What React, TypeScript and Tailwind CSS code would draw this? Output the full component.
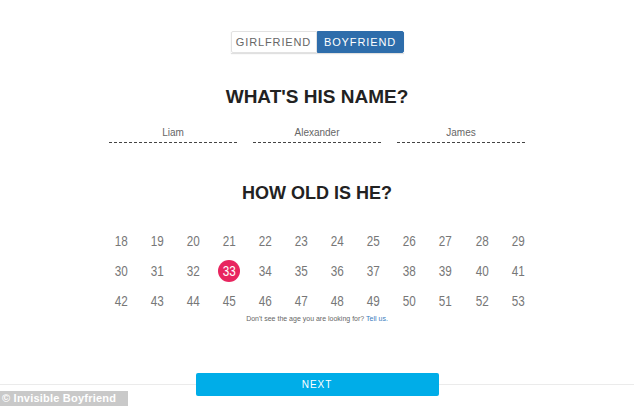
import React, { useState } from 'react';

const names = ['Liam', 'Alexander', 'James'];
const ages = Array.from({ length: 36 }, (_, i) => 18 + i);

const App: React.FC = () => {
  const [gender, setGender] = useState<'girlfriend' | 'boyfriend'>('boyfriend');
  const [age, setAge] = useState(33);

  return (
    <div className="relative w-[634px] h-[406px] overflow-hidden bg-white flex flex-col items-center font-['Liberation_Sans',sans-serif]">
      {/* Toggle */}
      <div className="mt-[31px] flex h-[22px] shadow-[0_1px_1px_rgba(0,0,0,0.12)]">
        <button
          onClick={() => setGender('girlfriend')}
          className={`w-[86px] text-[11px] tracking-[0.08em] border rounded-l-[2px] ${
            gender === 'girlfriend' ? 'bg-[#2e6dab] border-[#2e6dab] text-white' : 'bg-white border-[#e2e2e2] text-[#666]'
          }`}
        >
          GIRLFRIEND
        </button>
        <button
          onClick={() => setGender('boyfriend')}
          className={`w-[87px] text-[11px] tracking-[0.08em] border rounded-r-[2px] ${
            gender === 'boyfriend' ? 'bg-[#2e6dab] border-[#2e6dab] text-white' : 'bg-white border-[#e2e2e2] text-[#666]'
          }`}
        >
          BOYFRIEND
        </button>
      </div>

      <h1 className="mt-[34px] text-[19px] leading-[20px] font-black text-[#222]">WHAT'S HIS NAME?</h1>

      {/* Names */}
      <div className="mt-[20px] flex gap-[16px]">
        {names.map((n) => (
          <div key={n} className="w-[128px] text-center text-[10px] leading-[12px] text-[#666] pb-[3px] border-b border-dashed border-[#444]">
            {n}
          </div>
        ))}
      </div>

      <h2 className="mt-[40px] text-[18px] leading-[20px] font-black text-[#222]">HOW OLD IS HE?</h2>

      {/* Ages */}
      <div className="mt-[27px] ml-[5px] grid grid-cols-12 w-[433px] gap-y-[8px]">
        {ages.map((a) => (
          <button key={a} onClick={() => setAge(a)} className="flex h-[22px] items-center justify-center">
            <span
              className={`flex w-[22px] h-[22px] items-center justify-center rounded-full text-[15px] ${
                a === age ? 'bg-[#e8255f] text-white' : 'text-[#777]'
              }`}
            >
              <span className="inline-block scale-x-[0.78]">{a}</span>
            </span>
          </button>
        ))}
      </div>

      <p className="mt-[2px] text-[7px] leading-[9px] text-[#666]">
        Don't see the age you are looking for? <span className="text-[#3a7cc0]">Tell us.</span>
      </p>

      {/* Footer */}
      <div className="absolute left-0 bottom-0 w-full h-[33px] flex justify-center">
        <div className="absolute left-0 right-0 top-[11px] border-t border-[#ebebeb]" />
        <button className="relative w-[243px] h-[23px] rounded-[2px] bg-[#00ade8] text-white text-[10px] tracking-[0.1em]">NEXT</button>
        <div className="absolute left-0 bottom-0 h-[15px] w-[128px] bg-[#c9c9c9] text-white text-[11px] leading-[15px] font-bold pl-[2px] tracking-[0.02em]">
          © Invisible Boyfriend
        </div>
      </div>
    </div>
  );
};

export default App;
